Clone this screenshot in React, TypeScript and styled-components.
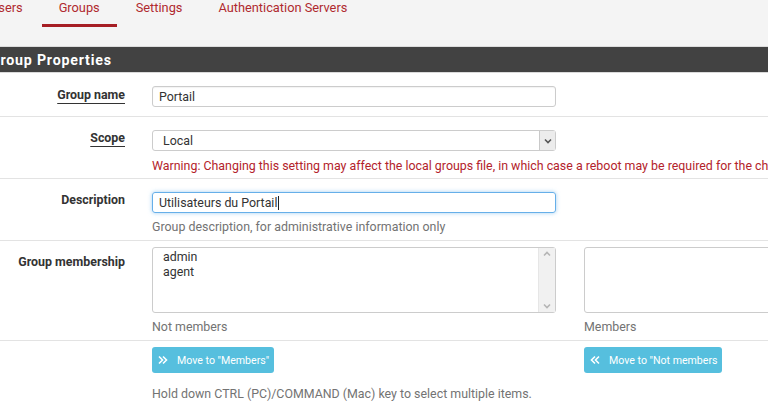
import React from 'react';
import styled, { createGlobalStyle } from 'styled-components';

const GlobalStyle = createGlobalStyle`
  html, body {
    margin: 0;
    padding: 0;
    background: #ffffff;
    overflow: hidden;
  }
  body {
    font-family: Roboto, "Liberation Sans", Arial, sans-serif;
    font-size: 12.4px;
    color: #333;
  }
`;

const Page = styled.div`
  margin-left: -25px;
  width: 1100px;
`;

const TabBar = styled.nav`
  height: 46px;
  background: #f4f4f4;
  border-bottom: 1px solid #dcdcdc;
  display: flex;
  align-items: flex-start;
  margin-left: -2px;
  gap: 2px;
`;

const Tab = styled.a<{ $active?: boolean }>`
  display: block;
  padding: 1px 17px 9px;
  line-height: 14px;
  font-size: 12.8px;
  color: #b02a2f;
  text-decoration: none;
  border-bottom: 3px solid ${p => (p.$active ? '#a61e24' : 'transparent')};
`;

const PanelHeading = styled.div`
  height: 25px;
  background: #424242;
  border-bottom: 1px solid #dadada;
  color: #fff;
  font-weight: 700;
  font-size: 14.2px;
  letter-spacing: 0.8px;
  line-height: 26px;
  padding-left: 15px;
`;

const Row = styled.div<{ $pt: number; $pb: number; $last?: boolean }>`
  display: grid;
  grid-template-columns: 150px 404px 404px;
  column-gap: 27px;
  padding: ${p => p.$pt}px 0 ${p => p.$pb}px;
  border-bottom: ${p => (p.$last ? 'none' : '1px solid #e3e3e3')};
`;

const Label = styled.div<{ $under?: boolean; $mt?: number }>`
  text-align: right;
  font-weight: 700;
  font-size: 12.4px;
  color: #333;
  line-height: 16px;
  margin-top: ${p => p.$mt ?? 0}px;
  span {
    text-decoration: ${p => (p.$under ? 'underline' : 'none')};
    text-underline-offset: 4px;
    text-decoration-thickness: 1px;
  }
`;

const Col = styled.div<{ $shift?: number }>`
  display: flex;
  flex-direction: column;
  margin-left: ${p => p.$shift ?? 0}px;
`;

const TextInput = styled.div<{ $focus?: boolean }>`
  height: 19px;
  border: 1px solid ${p => (p.$focus ? '#66afe9' : '#cccccc')};
  border-radius: 3px;
  box-shadow: ${p => (p.$focus ? '0 0 4px rgba(102,175,233,0.6)' : 'inset 0 1px 1px rgba(0,0,0,0.05)')};
  padding-left: 6px;
  line-height: 19px;
  font-size: 12.4px;
  color: #333;
  display: flex;
  align-items: center;
`;

const Caret = styled.span`
  display: inline-block;
  width: 1px;
  height: 14px;
  background: #222;
  margin-left: 1px;
`;

const SelectBox = styled.div`
  height: 19px;
  border: 1px solid #cccccc;
  border-radius: 3px;
  display: flex;
  align-items: stretch;
  font-size: 12.4px;
  color: #333;
`;

const SelectText = styled.div`
  flex: 1;
  padding-left: 10px;
  line-height: 19px;
`;

const SelectArrow = styled.div`
  width: 15px;
  background: #ececec;
  border-left: 1px solid #c9c9c9;
  display: flex;
  align-items: center;
  justify-content: center;
  color: #555;
`;

const Help = styled.div<{ $danger?: boolean; $mt?: number }>`
  margin-top: ${p => p.$mt ?? 7}px;
  font-size: 12.4px;
  line-height: 15px;
  white-space: nowrap;
  color: ${p => (p.$danger ? '#b3232b' : '#737373')};
`;

const ListBox = styled.div`
  height: 64px;
  border: 1px solid #cccccc;
  border-radius: 3px;
  display: flex;
`;

const ListItems = styled.div`
  flex: 1;
  padding: 1px 0 0 10px;
  font-size: 12.4px;
  line-height: 15px;
  color: #333;
`;

const ScrollTrack = styled.div`
  width: 16px;
  background: #f1f1f1;
  border-left: 1px solid #e6e6e6;
  display: flex;
  flex-direction: column;
  justify-content: space-between;
  align-items: center;
  padding: 3px 0;
  color: #b5b5b5;
`;

const Button = styled.div`
  display: inline-flex;
  align-items: center;
  align-self: flex-start;
  height: 26px;
  padding: 0 5px 0 6px;
  background: #56bfde;
  border-radius: 3px;
  color: #fff;
  font-size: 10.6px;
  white-space: nowrap;
  gap: 9px;
`;

const Chevron = ({ dir }: { dir: 'down' | 'up' }) => (
  <svg width="8" height="6" viewBox="0 0 8 6">
    <path
      d={dir === 'down' ? 'M1 1.5 L4 4.5 L7 1.5' : 'M1 4.5 L4 1.5 L7 4.5'}
      fill="none"
      stroke="currentColor"
      strokeWidth="1.6"
    />
  </svg>
);

const DoubleAngle = ({ dir }: { dir: 'left' | 'right' }) => (
  <svg width="10" height="10" viewBox="0 0 10 10">
    <path
      d={
        dir === 'right'
          ? 'M1 1.5 L4.5 5 L1 8.5 M5 1.5 L8.5 5 L5 8.5'
          : 'M9 1.5 L5.5 5 L9 8.5 M5 1.5 L1.5 5 L5 8.5'
      }
      fill="none"
      stroke="#fff"
      strokeWidth="1.6"
    />
  </svg>
);

export default function App() {
  return (
    <>
      <GlobalStyle />
      <Page>
        <TabBar>
          <Tab>Users</Tab>
          <Tab $active>Groups</Tab>
          <Tab>Settings</Tab>
          <Tab>Authentication Servers</Tab>
        </TabBar>
        <PanelHeading>Group Properties</PanelHeading>

        <Row $pt={13} $pb={9}>
          <Label $under $mt={1}><span>Group name</span></Label>
          <Col>
            <TextInput>Portail</TextInput>
          </Col>
        </Row>

        <Row $pt={13} $pb={5}>
          <Label $under><span>Scope</span></Label>
          <Col>
            <SelectBox>
              <SelectText>Local</SelectText>
              <SelectArrow><Chevron dir="down" /></SelectArrow>
            </SelectBox>
            <Help $danger>
              Warning: Changing this setting may affect the local groups file, in which case a reboot may be required for the changes to take effect.
            </Help>
          </Col>
        </Row>

        <Row $pt={13} $pb={6}>
          <Label><span>Description</span></Label>
          <Col>
            <TextInput $focus>
              Utilisateurs du Portail<Caret />
            </TextInput>
            <Help $mt={6}>Group description, for administrative information only</Help>
          </Col>
        </Row>

        <Row $pt={6} $pb={6}>
          <Label $mt={7}><span>Group membership</span></Label>
          <Col>
            <ListBox>
              <ListItems>
                <div>admin</div>
                <div>agent</div>
              </ListItems>
              <ScrollTrack>
                <Chevron dir="up" />
                <Chevron dir="down" />
              </ScrollTrack>
            </ListBox>
            <Help $mt={6}>Not members</Help>
          </Col>
          <Col $shift={1}>
            <ListBox />
            <Help $mt={6}>Members</Help>
          </Col>
        </Row>

        <Row $pt={6} $pb={6} $last>
          <div />
          <Col>
            <Button>
              <DoubleAngle dir="right" />
              Move to "Members"
            </Button>
            <Help $mt={13}>Hold down CTRL (PC)/COMMAND (Mac) key to select multiple items.</Help>
          </Col>
          <Col $shift={1}>
            <Button>
              <DoubleAngle dir="left" />
              Move to "Not members
            </Button>
          </Col>
        </Row>
      </Page>
    </>
  );
}
